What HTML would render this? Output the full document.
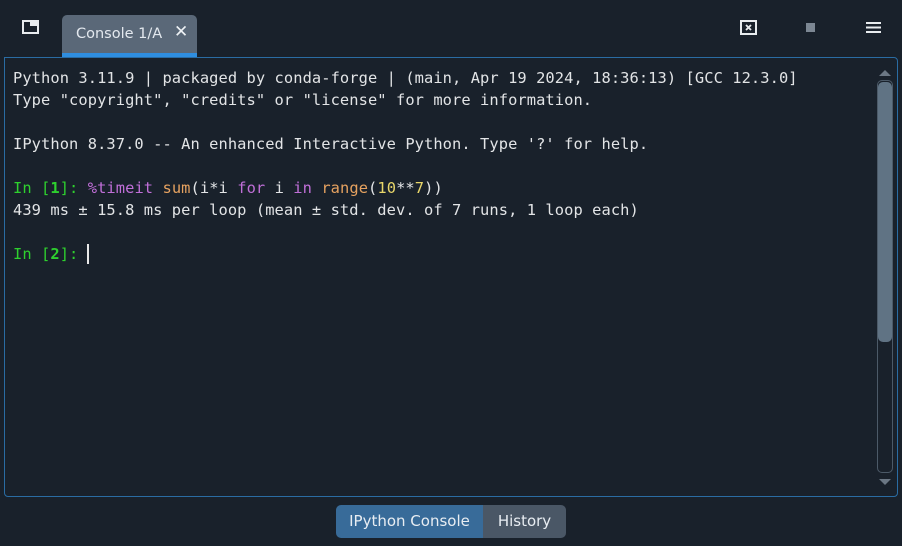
<!DOCTYPE html>
<html><head><style>
body{margin:0;width:902px;height:546px;background:#19212b;position:relative;overflow:hidden;font-family:"DejaVu Sans","Liberation Sans",sans-serif}
.tab{position:absolute;left:62px;top:15px;width:135px;height:42px;background:#5a6878;border-radius:5px 5px 0 0}
.tab .bar{position:absolute;left:0;right:0;bottom:0;height:4px;background:#2f8ee0}
.tab .t{position:absolute;left:14px;top:11px;font-size:14.5px;color:#e3e8ee}
.tab .x{position:absolute;left:112px;top:7px;font-size:17px;color:#eef2f5}
.panel{position:absolute;left:4px;top:57px;width:892px;height:438px;border:1px solid #2a6ca3;border-radius:0 4px 4px 4px;background:#19212b}
pre{position:absolute;left:13px;top:67px;margin:0;font-family:"DejaVu Sans Mono","Liberation Mono",monospace;font-size:15.4px;letter-spacing:0.075px;line-height:22px;color:#e2e4e6}
.g{color:#2ed02e}.gb{color:#2ed02e;font-weight:bold}.p{color:#c06fd8}.o{color:#e6a260}.y{color:#e8d66a}
.sb{position:absolute;left:877px;top:80px;width:14px;height:391px;border:1px solid #4c5a68;border-radius:5px}
.th{position:absolute;left:878px;top:82px;width:14px;height:260px;background:#607384;border-radius:5px}
.btn{position:absolute;top:505px;height:33px;line-height:33px;font-size:15px;color:#e8edf2;text-align:center}
</style></head><body>
<svg style="position:absolute;left:22px;top:20px" width="17" height="14"><rect x="1" y="1" width="15" height="12" fill="none" stroke="#e8ecef" stroke-width="2"/><rect x="8" y="1" width="8" height="5" fill="#e8ecef"/></svg>
<div class="tab"><span class="t">Console 1/A</span><span class="x">✕</span><div class="bar"></div></div>
<svg style="position:absolute;left:740px;top:20px" width="17" height="15"><rect x="1" y="1" width="15" height="13" fill="none" stroke="#e8ecef" stroke-width="2"/><path d="M6 5l5 5M11 5l-5 5" stroke="#e8ecef" stroke-width="1.8"/></svg>
<div style="position:absolute;left:806px;top:23px;width:9px;height:9px;background:#7c8793"></div>
<svg style="position:absolute;left:866px;top:21px" width="15" height="13"><path d="M0 2h15M0 6.5h15M0 11h15" stroke="#e8ecef" stroke-width="2"/></svg>
<div class="panel"></div>
<svg style="position:absolute;left:877px;top:68px" width="16" height="9"><path d="M2 8L8 2L14 8Z" fill="#6b7784"/></svg>
<svg style="position:absolute;left:877px;top:478px" width="16" height="9"><path d="M2 1L8 7L14 1Z" fill="#6b7784"/></svg>
<div class="sb"></div><div class="th"></div>
<pre>Python 3.11.9 | packaged by conda-forge | (main, Apr 19 2024, 18:36:13) [GCC 12.3.0]
Type "copyright", "credits" or "license" for more information.

IPython 8.37.0 -- An enhanced Interactive Python. Type '?' for help.

<span class="g">In [</span><span class="gb">1</span><span class="g">]:</span> <span class="p">%timeit</span> <span class="o">sum</span>(i*i <span class="p">for</span> i <span class="p">in</span> <span class="o">range</span>(<span class="y">10</span>**<span class="y">7</span>))
439 ms ± 15.8 ms per loop (mean ± std. dev. of 7 runs, 1 loop each)

<span class="g">In [</span><span class="gb">2</span><span class="g">]:</span> </pre>
<div style="position:absolute;left:87px;top:244px;width:2px;height:20px;background:#e8e8e8"></div>
<div class="btn" style="left:336px;width:147px;background:#386b99;border-radius:5px 0 0 5px">IPython Console</div>
<div class="btn" style="left:483px;width:83px;background:#4a5766;border-radius:0 5px 5px 0">History</div>
</body></html>
